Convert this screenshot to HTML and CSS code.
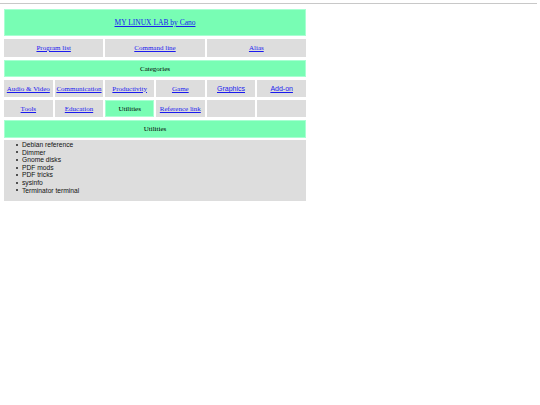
FILE: index.html
```html
<!DOCTYPE html>
<html>
<head>
<meta charset="utf-8">
<title>MY LINUX LAB by Cano</title>
<link rel="stylesheet" href="styles.css">
</head>
<body>
<div class="rule"></div>
<div class="page">
  <div class="cell green header"><a href="#">MY LINUX LAB by Cano</a></div>
  <div class="nav">
    <div class="cell gray"><a href="#">Program list</a></div>
    <div class="cell gray"><a href="#">Command line</a></div>
    <div class="cell gray"><a href="#">Alias</a></div>
  </div>
  <div class="cell green title">Categories</div>
  <div class="cats">
    <div class="cell gray"><a href="#">Audio &amp; Video</a></div>
    <div class="cell gray"><a href="#">Communication</a></div>
    <div class="cell gray"><a href="#">Productivity</a></div>
    <div class="cell gray"><a href="#">Game</a></div>
    <div class="cell gray sans"><a href="#">Graphics</a></div>
    <div class="cell gray sans"><a href="#">Add-on</a></div>
    <div class="cell gray"><a href="#">Tools</a></div>
    <div class="cell gray"><a href="#">Education</a></div>
    <div class="cell green">Utilities</div>
    <div class="cell gray"><a href="#">Reference link</a></div>
    <div class="cell gray"></div>
    <div class="cell gray"></div>
  </div>
  <div class="cell green title util">Utilities</div>
  <div class="list">
    <ul>
      <li>Debian reference</li>
      <li>Dimmer</li>
      <li>Gnome disks</li>
      <li>PDF mods</li>
      <li>PDF tricks</li>
      <li>sysinfo</li>
      <li>Terminator terminal</li>
    </ul>
  </div>
</div>
</body>
</html>
```

FILE: styles.css
```css
html, body {
  margin: 0;
  padding: 0;
  background: #ffffff;
}
body {
  font-family: "Liberation Serif", "Times New Roman", serif;
  font-size: 7px;
  color: #000000;
}
.rule {
  margin: 3px 3px 0 0;
  border-top: 1px solid #c8c8c8;
  height: 0;
}
.page {
  width: 302px;
  margin: 5px 0 0 4px;
  display: flex;
  flex-direction: column;
  gap: 3px;
}
.cell {
  display: flex;
  align-items: center;
  justify-content: center;
  text-align: center;
  box-sizing: border-box;
  white-space: nowrap;
}
.green {
  background: #78fdb4;
  box-shadow: inset 0 0 0 1px #a8ffd2;
}
.gray {
  background: #dddddd;
}
a {
  color: #1a1aee;
  text-decoration: underline;
}
.header {
  height: 27px;
  font-size: 7.5px;
}
.nav {
  display: grid;
  grid-template-columns: repeat(3, 1fr);
  gap: 2px;
}
.nav .cell {
  height: 18px;
}
.title {
  height: 17px;
}
.util {
  height: 18px;
}
.cats {
  display: grid;
  grid-template-columns: repeat(6, 1fr);
  column-gap: 2px;
  row-gap: 3px;
}
.cats .cell {
  height: 17px;
}
.sans {
  font-family: "Liberation Sans", Arial, sans-serif;
  font-size: 7px;
}
.list {
  background: #dddddd;
  height: 61px;
  margin-top: -1px;
  font-family: "Liberation Sans", Arial, sans-serif;
  font-size: 6.7px;
  line-height: 7.6px;
  color: #111111;
}
.list ul {
  margin: 0;
  padding: 1px 0 0 12px;
  list-style: none;
}
.list li {
  display: flex;
  align-items: center;
}
.list li::before {
  content: "";
  width: 2px;
  height: 2px;
  border-radius: 50%;
  background: #222222;
  margin-right: 4px;
  flex: none;
}
```
